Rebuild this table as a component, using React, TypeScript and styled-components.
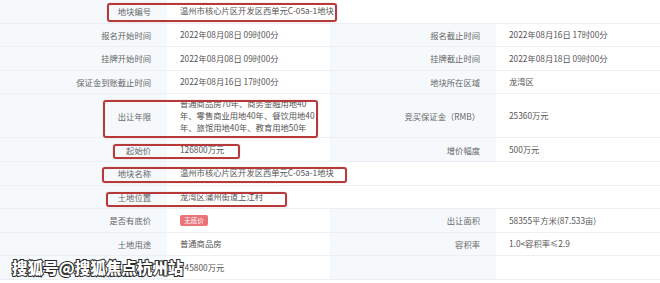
import type { ReactNode } from 'react';
import { styled, createGlobalStyle } from 'styled-components';

const GlobalStyle = createGlobalStyle`
    html, body {
        margin: 0;
        padding: 0;
        background: #ffffff;
        overflow: hidden;
    }
`;

const Page = styled.div`
    position: relative;
    width: 660px;
    height: 283px;
    overflow: hidden;
    background: #ffffff;
    font-family: 'Noto Sans CJK SC', 'Microsoft YaHei', sans-serif;
    font-size: 8.3px;
`;

const Table = styled.div`
    display: flex;
    flex-direction: column;
    width: 660px;
`;

const Row = styled.div<{ $tall?: boolean }>`
    display: grid;
    grid-template-columns: 167px 163px 166px 164px;
    height: ${({ $tall }) => ($tall ? '44px' : '23.6px')};
    box-sizing: border-box;
    border-bottom: 1px solid #eceff3;
`;

const Pair = styled.div`
    display: contents;
`;

const Label = styled.div`
    display: flex;
    align-items: center;
    justify-content: flex-end;
    padding-right: 16px;
    background: #f5f9fc;
    color: #666666;
    white-space: nowrap;
`;

const Value = styled.div<{ $span?: boolean }>`
    display: flex;
    align-items: center;
    padding-left: 13px;
    color: #555555;
    line-height: 11.8px;
    white-space: nowrap;
    grid-column: ${({ $span }) => ($span ? 'span 3' : 'auto')};
`;

const Badge = styled.span`
    display: inline-flex;
    align-items: center;
    justify-content: center;
    width: 28px;
    height: 11px;
    border-radius: 2px;
    background: #e97378;
    color: #ffffff;
    font-size: 6.5px;
`;

const Mark = styled.div<{ $x: number; $y: number; $w: number; $h: number }>`
    position: absolute;
    left: ${({ $x }) => $x}px;
    top: ${({ $y }) => $y}px;
    width: ${({ $w }) => $w}px;
    height: ${({ $h }) => $h}px;
    box-sizing: border-box;
    border: 2px solid #b8393a;
    border-radius: 3px;
    box-shadow: 0 0 1px rgba(120, 20, 20, 0.5);
`;

const Watermark = styled.div`
    position: absolute;
    left: 12px;
    top: 256px;
    font-size: 15.5px;
    font-weight: 900;
    color: #ffffff;
    -webkit-text-stroke: 2px #2a2a2a;
    paint-order: stroke fill;
    white-space: nowrap;
`;

type Cell = { label: string; value?: ReactNode; span?: boolean };
type RowData = { cells: Cell[]; tall?: boolean };

const rows: RowData[] = [
    { cells: [{ label: '地块编号', value: '温州市核心片区开发区西单元C-05a-1地块', span: true }] },
    {
        cells: [
            { label: '报名开始时间', value: '2022年08月08日 09时00分' },
            { label: '报名截止时间', value: '2022年08月16日 17时00分' },
        ],
    },
    {
        cells: [
            { label: '挂牌开始时间', value: '2022年08月08日 09时00分' },
            { label: '挂牌截止时间', value: '2022年08月18日 09时00分' },
        ],
    },
    {
        cells: [
            { label: '保证金到账截止时间', value: '2022年08月16日 17时00分' },
            { label: '地块所在区域', value: '龙湾区' },
        ],
    },
    {
        tall: true,
        cells: [
            {
                label: '出让年限',
                value: (
                    <span>
                        普通商品房70年、商务金融用地40
                        <br />
                        年、零售商业用地40年、餐饮用地40
                        <br />
                        年、旅馆用地40年、教育用地50年
                    </span>
                ),
            },
            { label: '竞买保证金（RMB）', value: '25360万元' },
        ],
    },
    {
        cells: [
            { label: '起始价', value: '126800万元' },
            { label: '增价幅度', value: '500万元' },
        ],
    },
    { cells: [{ label: '地块名称', value: '温州市核心片区开发区西单元C-05a-1地块', span: true }] },
    { cells: [{ label: '土地位置', value: '龙湾区蒲州街道上江村', span: true }] },
    {
        cells: [
            { label: '是否有底价', value: <Badge>无底价</Badge> },
            { label: '出让面积', value: '58355平方米(87.533亩)' },
        ],
    },
    {
        cells: [
            { label: '土地用途', value: '普通商品房' },
            { label: '容积率', value: '1.0<容积率≤2.9' },
        ],
    },
    {
        // label hidden under the watermark in the source
        cells: [
            { label: '', value: '145800万元' },
            { label: '', value: '' },
        ],
    },
];

// annotation boxes drawn over the screenshot
const marks = [
    { x: 107, y: 3, w: 230, h: 19 },
    { x: 103, y: 100, w: 215, h: 38 },
    { x: 113, y: 144, w: 127, h: 15 },
    { x: 102, y: 167, w: 245, h: 16 },
    { x: 106, y: 192, w: 181, h: 15 },
];

function App() {
    return (
        <Page>
            <GlobalStyle />
            <Table>
                {rows.map((row, i) => (
                    <Row key={i} $tall={row.tall}>
                        {row.cells.map((cell, j) => (
                            <Pair key={j}>
                                <Label>{cell.label}</Label>
                                <Value $span={cell.span}>{cell.value}</Value>
                            </Pair>
                        ))}
                    </Row>
                ))}
            </Table>
            {marks.map((m, i) => (
                <Mark key={i} $x={m.x} $y={m.y} $w={m.w} $h={m.h} />
            ))}
            <Watermark>搜狐号@搜狐焦点杭州站</Watermark>
        </Page>
    );
}

export default App;
